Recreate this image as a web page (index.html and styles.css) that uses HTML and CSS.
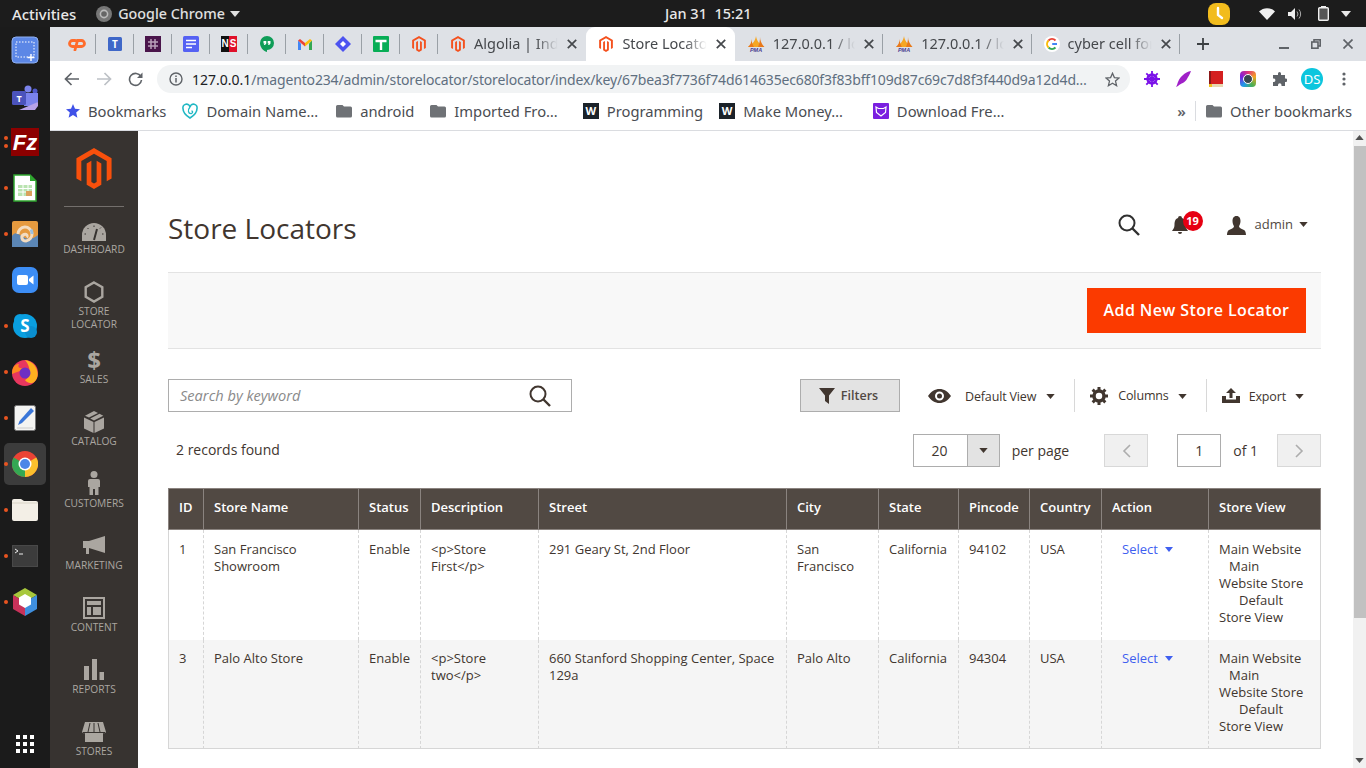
FILE: index.html
```html
<!DOCTYPE html>
<html lang="en">
<head>
<meta charset="utf-8">
<title>Store Locators</title>
<link rel="stylesheet" href="styles.css">
</head>
<body>
<svg class="defs" width="0" height="0" aria-hidden="true">
  <defs>
    <symbol id="mage" viewBox="0 0 36 42">
      <path fill="currentColor" d="M18 0 36 10.4V31.2L31 34V13.3L18 5.8 5 13.3V34L0 31.2V10.4Z"/>
      <path fill="currentColor" d="M18 42 10.5 37.6V15.8L15.3 13V34.8L18 36.4 20.7 34.8V13L25.5 15.8V37.6Z"/>
    </symbol>
    <symbol id="pma" viewBox="0 0 18 16">
      <path fill="#f5a623" d="M9 0C9.500 4 12 8 17 11H1C6 8 8.500 4 9 0Z"/>
      <path fill="#e8791a" d="M13 1C13 4 14.500 8 17.500 11H11C12.500 8 13 4 13 1ZM4.500 3C4.500 6 3.500 9 1 11H7C5.500 9 4.800 6 4.500 3Z"/>
      <text class="pma-text" x="9" y="15.700" text-anchor="middle">PMA</text>
    </symbol>
    <symbol id="folder" viewBox="0 0 16 14">
      <path fill="#6f7276" d="M1.500 1H6.500L8 2.500H14.500A1.500 1.500 0 0 1 16 4V12A1.500 1.500 0 0 1 14.500 13.500H1.500A1.500 1.500 0 0 1 0 12V2.500A1.500 1.500 0 0 1 1.500 1Z"/>
    </symbol>
    <symbol id="caret" viewBox="0 0 10 6">
      <path fill="currentColor" d="M0 0H10L5 6Z"/>
    </symbol>
    <symbol id="tabx" viewBox="0 0 10 10">
      <path d="M0.800 0.800 9.200 9.200M9.200 0.800 0.800 9.200" stroke="#45484c" stroke-width="1.700" fill="none"/>
    </symbol>
  </defs>
</svg>

<header class="sysbar">
  <div class="sys-left">
    <span class="sys-activities">Activities</span>
    <span class="sys-app">
      <svg width="16" height="16" viewBox="0 0 16 16"><circle cx="8" cy="8" r="8" fill="#777"/><circle cx="8" cy="8" r="4.400" fill="#bbb"/><circle cx="8" cy="8" r="2.800" fill="#666"/></svg>
      <span>Google Chrome</span>
      <svg class="sys-caret" width="10" height="6"><use href="#caret"/></svg>
    </span>
  </div>
  <div class="sys-clock">Jan 31&nbsp;&nbsp;15:21</div>
  <div class="sys-right">
    <svg class="sys-lime" width="22" height="22" viewBox="0 0 22 22"><rect width="22" height="22" rx="8" fill="#f2bc1d"/><path d="M10 5V12L14 15" fill="none" stroke="#fff" stroke-width="2.400" stroke-linecap="round"/></svg>
    <svg class="sys-wifi" width="16" height="12" viewBox="0 0 16 12"><path fill="#eee" d="M0 3.500C4.500-1 11.500-1 16 3.500L8 12Z"/></svg>
    <svg class="sys-vol" width="14" height="12" viewBox="0 0 14 12"><path fill="#eee" d="M0 4H3L7 0V12L3 8H0Z"/><path d="M9 3.500A4 4 0 0 1 9 8.500M11 1.500A7 7 0 0 1 11 10.500" fill="none" stroke="#aaa" stroke-width="1"/></svg>
    <svg class="sys-bat" width="11" height="15" viewBox="0 0 11 15"><rect x="3" width="5" height="2" fill="#eee"/><rect x=".7" y="1.700" width="9.600" height="12.600" rx="1" fill="#555" stroke="#eee" stroke-width="1.400"/></svg>
    <svg class="sys-caret2" width="10" height="6"><use href="#caret"/></svg>
  </div>
</header>

<div class="desk">
  <nav class="dock">
    <div class="dock-item">
      <svg width="28" height="28" viewBox="0 0 28 28"><rect x="1" y="1" width="26" height="26" rx="4" fill="#5c87e6" stroke="#8fb0f2"/><rect x="5" y="6" width="18" height="15" fill="none" stroke="#fff" stroke-dasharray="1.500 1.500"/><path d="M20 18V25M16.500 21.500H23.500" stroke="#fff" stroke-width="1.400"/></svg>
    </div>
    <div class="dock-item">
      <svg class="dock-low" width="28" height="26" viewBox="0 0 28 26"><circle cx="17" cy="4" r="3.500" fill="#7b83eb"/><circle cx="24" cy="6" r="2.500" fill="#5059c9"/><path d="M13 8H27V17L24 21H13Z" fill="#7b83eb"/><rect x="1" y="6" width="14" height="14" rx="1.500" fill="#4b53bc"/><path d="M8 25 27 17V21L24 25Z" fill="#b7a2e8"/><text class="dock-t" x="8" y="17" text-anchor="middle">T</text></svg>
    </div>
    <div class="dock-item">
      <span class="dot dot-up"></span><span class="dot dot-down"></span>
      <svg width="28" height="28" viewBox="0 0 28 28"><rect width="28" height="28" fill="#8c0000"/><text class="dock-fz" x="14" y="22" text-anchor="middle">Fz</text></svg>
    </div>
    <div class="dock-item">
      <span class="dot"></span>
      <svg width="24" height="28" viewBox="0 0 24 28"><path d="M1 1H17L23 7V27H1Z" fill="#fff" stroke="#2fa52f" stroke-width="1.500"/><path d="M17 1 23 7H17Z" fill="#2fa52f"/><path d="M5 11H19V22H5Z" fill="#b9e3b0"/><path d="M5 14.500H19M5 18H19M10 11V22M15 11V22" stroke="#fff"/><rect x="13" y="17" width="6" height="5" fill="#d9a15c"/></svg>
    </div>
    <div class="dock-item">
      <span class="dot"></span>
      <svg width="26" height="26" viewBox="0 0 26 26"><rect width="26" height="26" rx="2" fill="#e59a3f"/><path d="M0 15C6 5 12 26 26 14V26H0Z" fill="#5b86b5"/><path d="M6 13A7 7 0 1 1 14 20C9.500 20 8.500 15 12 13.500 14.500 12.500 16 15 14.500 16" fill="none" stroke="#f2dcc0" stroke-width="3"/><path d="M19 8.500A7 7 0 0 1 20 13" fill="none" stroke="#9cc0e0" stroke-width="3"/></svg>
    </div>
    <div class="dock-item">
      <svg width="26" height="26" viewBox="0 0 26 26"><rect width="26" height="26" rx="7" fill="#3c8df5"/><rect x="5" y="8" width="11" height="10" rx="2" fill="#fff"/><path d="M17 12 21.500 8.500V17.500L17 14Z" fill="#fff"/></svg>
    </div>
    <div class="dock-item">
      <span class="dot"></span>
      <svg width="26" height="26" viewBox="0 0 26 26"><circle cx="13" cy="13" r="12" fill="#0a9fe0"/><circle cx="8" cy="7" r="6" fill="#0a9fe0"/><circle cx="19" cy="19" r="6" fill="#0a8fd0"/><text class="dock-s" x="13" y="19" text-anchor="middle">S</text></svg>
    </div>
    <div class="dock-item">
      <span class="dot"></span>
      <svg width="26" height="28" viewBox="0 0 26 28"><circle cx="13" cy="15" r="13" fill="#e8375f"/><path d="M13 2C25 4 28 16 24 22 20 28 14 24 13 22 18 20 20 10 13 2Z" fill="#ffb01f"/><path d="M0 16C0 8 4 6 7 6 5 10 8 10 13 11 10 12 5 14 0 16Z" fill="#ff8a1e"/><circle cx="13" cy="15" r="5.500" fill="#6e2fc4"/></svg>
    </div>
    <div class="dock-item">
      <span class="dot"></span>
      <svg width="22" height="26" viewBox="0 0 22 26"><rect x=".5" y=".5" width="21" height="25" rx="2" fill="#f4f4f2" stroke="#777"/><path d="M17 3 20 6 8 18 4 20 5.500 16Z" fill="#3a76d8"/><path d="M3 23H19" stroke="#ccc"/></svg>
    </div>
    <div class="dock-item dock-active">
      <span class="dot"></span>
      <svg width="26" height="26" viewBox="0 0 26 26"><circle cx="13" cy="13" r="13" fill="#ea4335"/><path d="M13 13 1.700 6.500A13 13 0 0 0 13 26Z" fill="#34a853"/><path d="M13 13 13 26A13 13 0 0 0 24.300 6.500Z" fill="#fbc02d"/><circle cx="13" cy="13" r="6.500" fill="#fff"/><circle cx="13" cy="13" r="5" fill="#4a86e8"/></svg>
    </div>
    <div class="dock-item">
      <span class="dot"></span>
      <svg width="28" height="24" viewBox="0 0 28 24"><path d="M1 3Q1 1 3 1H10L13 3H25Q27 3 27 5V21Q27 23 25 23H3Q1 23 1 21Z" fill="#f3efe6"/><path d="M1 5H27" stroke="#d9d4c6"/></svg>
    </div>
    <div class="dock-item">
      <span class="dot"></span>
      <svg width="26" height="22" viewBox="0 0 26 22"><rect width="26" height="22" rx="2" fill="#3c3c3c" stroke="#555"/><path d="M3 4 6 6 3 8M7 9H11" fill="none" stroke="#eee"/></svg>
    </div>
    <div class="dock-item">
      <span class="dot"></span>
      <svg width="24" height="28" viewBox="0 0 24 28"><path d="M12 0 24 7 12 14 0 7Z" fill="#a8c83c"/><path d="M0 7 12 14V28L0 21Z" fill="#c8325a"/><path d="M24 7 12 14V28L24 21Z" fill="#3f8fde"/><path d="M12 6 18 9.500V16.500L12 20 6 16.500V9.500Z" fill="#fff"/></svg>
    </div>
    <div class="dock-item dock-apps">
      <svg width="18" height="18" viewBox="0 0 18 18"><g fill="#fff"><rect width="4" height="4"/><rect x="7" width="4" height="4"/><rect x="14" width="4" height="4"/><rect y="7" width="4" height="4"/><rect x="7" y="7" width="4" height="4"/><rect x="14" y="7" width="4" height="4"/><rect y="14" width="4" height="4"/><rect x="7" y="14" width="4" height="4"/><rect x="14" y="14" width="4" height="4"/></g></svg>
    </div>
  </nav>

  <div class="browser">
    <div class="tabstrip">
      <div class="pin"><svg width="18" height="14" viewBox="0 0 18 14"><path d="M7 3.500H4.500A3 3 0 0 0 4.500 9.500H6M7 13 9.500 3.500H13.500A3 3 0 0 1 13.500 9.500H10" fill="none" stroke="#ff6c2c" stroke-width="2.800" stroke-linecap="round"/></svg></div>
      <div class="pin"><svg width="14" height="14" viewBox="0 0 14 14"><rect width="14" height="14" rx="1.500" fill="#3f67c8"/><text class="fav-t" x="7" y="11" text-anchor="middle">T</text></svg></div>
      <div class="pin"><svg width="16" height="16" viewBox="0 0 16 16"><rect width="16" height="16" fill="#4a154b"/><path d="M3 6H13M3 10H13M6 3V13M10 3V13" stroke="#b9a0ba" stroke-width="1.500"/></svg></div>
      <div class="pin"><svg width="16" height="16" viewBox="0 0 16 16"><rect width="16" height="16" rx="1.500" fill="#5561f3"/><path d="M3 4.500H13M3 8H13M3 11.500H9" stroke="#fff" stroke-width="1.500"/></svg></div>
      <div class="pin"><span class="fav-ns"><span class="fav-n">N</span><span class="fav-s">S</span></span></div>
      <div class="pin"><svg width="14" height="16" viewBox="0 0 14 16"><path d="M7 0A7 7 0 0 1 7 14V16C3 15 0 11 0 7A7 7 0 0 1 7 0Z" fill="#0f9d58"/><path d="M3.500 5H6.300V7.500L5 9H3.800L4.600 7.500H3.500ZM7.700 5H10.500V7.500L9.200 9H8L8.800 7.500H7.700Z" fill="#fff"/></svg></div>
      <div class="pin"><svg width="14" height="11" viewBox="0 0 14 11"><path d="M0 1.500V11H3V4.500Z" fill="#4285f4"/><path d="M14 1.500V11H11V4.500Z" fill="#34a853"/><path d="M0 1.500 2 0 7 4 7 7.500Z" fill="#ea4335"/><path d="M14 1.500 12 0 7 4V7.500Z" fill="#fbbc05"/></svg></div>
      <div class="pin"><svg width="16" height="16" viewBox="0 0 16 16"><path d="M8 0 16 8 8 16 0 8Z" fill="#4c53f0"/><path d="M8 5 11 8 8 11 5 8Z" fill="#fff"/></svg></div>
      <div class="pin"><svg width="16" height="16" viewBox="0 0 16 16"><rect width="16" height="16" rx="1" fill="#08ad56"/><path d="M2.500 5H13.500M8 5V14" stroke="#fff" stroke-width="2.400"/></svg></div>
      <div class="pin"><svg class="mage" width="14" height="16"><use href="#mage"/></svg></div>
      <div class="tab">
        <svg class="mage tab-mage" width="14" height="16"><use href="#mage"/></svg>
        <span class="tab-title">Algolia | Index</span>
        <svg class="tab-x" width="10" height="10"><use href="#tabx"/></svg>
      </div>
      <div class="tab tab-on">
        <svg class="mage tab-mage" width="14" height="16"><use href="#mage"/></svg>
        <span class="tab-title">Store Locators</span>
        <svg class="tab-x" width="10" height="10"><use href="#tabx"/></svg>
      </div>
      <div class="tab">
        <svg width="18" height="16"><use href="#pma"/></svg>
        <span class="tab-title">127.0.0.1 / localhost</span>
        <svg class="tab-x" width="10" height="10"><use href="#tabx"/></svg>
      </div>
      <div class="tab">
        <svg width="18" height="16"><use href="#pma"/></svg>
        <span class="tab-title">127.0.0.1 / localhost</span>
        <svg class="tab-x" width="10" height="10"><use href="#tabx"/></svg>
      </div>
      <div class="tab">
        <svg class="tab-g" width="16" height="16" viewBox="0 0 16 16"><circle cx="8" cy="8" r="8" fill="#fff"/><path d="M13 8H8.200" stroke="#4285f4" stroke-width="2"/><path d="M11.500 11.500A5 5 0 0 1 4.500 11.500" fill="none" stroke="#34a853" stroke-width="2"/><path d="M4.500 11.500A5 5 0 0 1 4.500 4.500" fill="none" stroke="#fbbc05" stroke-width="2"/><path d="M4.500 4.500A5 5 0 0 1 11.500 4.500" fill="none" stroke="#ea4335" stroke-width="2"/></svg>
        <span class="tab-title">cyber cell for india</span>
        <svg class="tab-x" width="10" height="10"><use href="#tabx"/></svg>
      </div>
      <svg class="newtab" width="12" height="12" viewBox="0 0 12 12"><path d="M6 0V12M0 6H12" stroke="#3c4043" stroke-width="1.800"/></svg>
      <div class="winctl">
        <svg width="10" height="10" viewBox="0 0 10 10"><path d="M0 9H10" stroke="#5f6368" stroke-width="2"/></svg>
        <svg width="10" height="10" viewBox="0 0 10 10"><rect x="3" y="0.800" width="6.200" height="6.200" fill="none" stroke="#5f6368" stroke-width="1.600"/><rect x="0.800" y="3" width="6.200" height="6.200" fill="#dee1e6" stroke="#5f6368" stroke-width="1.600"/></svg>
        <svg width="10" height="10" viewBox="0 0 10 10"><path d="M0.500 0.500 9.500 9.500M9.500 0.500 0.500 9.500" stroke="#5f6368" stroke-width="1.700"/></svg>
      </div>
    </div>

    <div class="toolbar">
      <svg class="tb-back" width="16" height="14" viewBox="0 0 16 14"><path d="M15 7H2M7.500 1 1.500 7 7.500 13" fill="none" stroke="#5f6368" stroke-width="1.700"/></svg>
      <svg class="tb-fwd" width="16" height="14" viewBox="0 0 16 14"><path d="M1 7H14M8.500 1 14.500 7 8.500 13" fill="none" stroke="#bdc1c6" stroke-width="1.700"/></svg>
      <svg class="tb-reload" width="15" height="15" viewBox="0 0 15 15"><path d="M12.800 4.500A6 6 0 1 0 13.500 8" fill="none" stroke="#5f6368" stroke-width="1.600"/><path d="M14.500 0.500V6H9Z" fill="#5f6368"/></svg>
      <div class="omni">
        <svg width="14" height="14" viewBox="0 0 14 14"><circle cx="7" cy="7" r="6" fill="none" stroke="#5f6368" stroke-width="1.400"/><path d="M7 6V10.500M7 3.500V5" stroke="#5f6368" stroke-width="1.500"/></svg>
        <span class="url"><span class="url-host">127.0.0.1</span>/magento234/admin/storelocator/storelocator/index/key/67bea3f7736f74d614635ec680f3f83bff109d87c69c7d8f3f440d9a12d4d…</span>
        <svg class="omni-star" width="15" height="15" viewBox="0 0 15 15"><path d="M7.500 1.300 9.400 5.600 14 6 10.500 9.100 11.600 13.700 7.500 11.300 3.400 13.700 4.500 9.100 1 6 5.600 5.600Z" fill="none" stroke="#5f6368" stroke-width="1.300"/></svg>
      </div>
      <div class="exts">
        <svg width="16" height="16" viewBox="0 0 16 16"><circle cx="8" cy="8" r="4.500" fill="none" stroke="#7a11e8" stroke-width="2.400"/><path d="M8 0V16M0 8H16M2.300 2.300 13.700 13.700M13.700 2.300 2.300 13.700" stroke="#7a11e8" stroke-width="1.800"/></svg>
        <svg width="16" height="16" viewBox="0 0 16 16"><path d="M15 0C9 1 3 6 1 14L0 16 2 15C5 12 9 12 11 8 12 6 14 3 15 0Z" fill="#a020c8"/></svg>
        <svg width="16" height="16" viewBox="0 0 16 16"><rect x="1" width="14" height="13" fill="#d42020"/><rect x="1" y="13" width="14" height="3" fill="#e8d8b0"/><rect x="1" width="2" height="16" fill="#8c1818"/><rect x="1" y="13" width="3" height="3" fill="#f0c020"/></svg>
        <span class="ext-cam"><span class="ext-cam-in"></span></span>
        <svg width="14" height="14" viewBox="0 0 14 14"><path fill="#5f6368" d="M5 1.500A1.500 1.500 0 0 1 8 1.500V3H12V6.500H13A1.800 1.800 0 0 1 13 10H12V14H8.500V13A1.700 1.700 0 0 0 5 13V14H0V10H1A1.800 1.800 0 0 0 1 6.500H0V3H5Z"/></svg>
        <span class="avatar">DS</span>
        <svg width="4" height="14" viewBox="0 0 4 14"><g fill="#5f6368"><circle cx="2" cy="2" r="1.600"/><circle cx="2" cy="7" r="1.600"/><circle cx="2" cy="12" r="1.600"/></g></svg>
      </div>
    </div>

    <div class="bookmarks">
      <div class="bm"><svg width="14" height="14" viewBox="0 0 14 14"><path fill="#3f51e8" d="M7 0 9 4.800 14 5.300 10.200 8.600 11.400 13.700 7 11 2.600 13.700 3.800 8.600 0 5.300 5 4.800Z"/></svg><span>Bookmarks</span></div>
      <div class="bm"><svg width="16" height="16" viewBox="0 0 16 16"><path d="M8 15C3 12 1 9 1 5.500A3.500 3.500 0 0 1 8 4 3.500 3.500 0 0 1 15 5.500C15 9 13 12 8 15Z" fill="none" stroke="#22b8c4" stroke-width="1.600"/><path d="M8 4C5.500 7 6 11 9.500 10.500 11 10 11 8 9.500 8" fill="none" stroke="#22b8c4" stroke-width="1.300"/></svg><span>Domain Name…</span></div>
      <div class="bm bm-a"><svg width="16" height="14"><use href="#folder"/></svg><span>android</span></div>
      <div class="bm"><svg width="16" height="14"><use href="#folder"/></svg><span>Imported Fro…</span></div>
      <div class="bm bm-w"><span class="w-ico">W</span><span>Programming</span></div>
      <div class="bm"><span class="w-ico">W</span><span>Make Money…</span></div>
      <div class="bm bm-d"><svg width="16" height="16" viewBox="0 0 16 16"><rect width="16" height="16" rx="1" fill="#7a1fe0"/><path d="M3 4 5.500 5.500H10.500L13 4 12.500 9.500 8 13 3.500 9.500Z" fill="none" stroke="#fff" stroke-width="1.200"/></svg><span>Download Fre…</span></div>
      <div class="bm-right">
        <span class="bm-more">»</span>
        <span class="bm-sep"></span>
        <div class="bm"><svg width="16" height="14"><use href="#folder"/></svg><span>Other bookmarks</span></div>
      </div>
    </div>

    <div class="page">
      <aside class="side">
        <div class="side-logo"><svg class="logo" width="36" height="41"><use href="#mage"/></svg></div>
        <ul class="side-nav">
          <li class="nav">
            <span class="nav-ico"><svg class="ico-dash" width="24" height="18" viewBox="0 0 24 18"><path fill="#aaa6a0" d="M0 18V12A12 12 0 0 1 24 12V18Z"/><path d="M12 17 15 6" stroke="#373330" stroke-width="2"/><path d="M4 11H2.500M6.500 6 5.500 5M12 4V2.500M21.500 11H20M18 5.500 19 4.500" stroke="#373330"/></svg></span>
            <span class="nav-label">Dashboard</span>
          </li>
          <li class="nav nav-tall">
            <span class="nav-ico"><svg width="20" height="22" viewBox="0 0 20 22"><path d="M10 1.500 18.300 6.200V15.800L10 20.500 1.700 15.800V6.200Z" fill="none" stroke="#aaa6a0" stroke-width="2.400"/></svg></span>
            <span class="nav-label">Store<br>Locator</span>
          </li>
          <li class="nav">
            <span class="nav-ico nav-dollar">$</span>
            <span class="nav-label">Sales</span>
          </li>
          <li class="nav">
            <span class="nav-ico"><svg width="20" height="22" viewBox="0 0 20 22"><path fill="#aaa6a0" d="M0 6.500 9.500 11V22L0 17.500ZM20 6.500 10.500 11V22L20 17.500ZM10 0 14 2 5 6.500 1 4.700ZM15.500 2.800 19.300 4.700 10 9.500 6.200 7.500Z"/></svg></span>
            <span class="nav-label">Catalog</span>
          </li>
          <li class="nav">
            <span class="nav-ico"><svg class="ico-cust" width="12" height="24" viewBox="0 0 12 24"><circle cx="6" cy="3.500" r="3.500" fill="#aaa6a0"/><path fill="#aaa6a0" d="M2 8H10Q12 8 12 10V16H10.500V24H7V18H5V24H1.500V16H0V10Q0 8 2 8Z"/></svg></span>
            <span class="nav-label">Customers</span>
          </li>
          <li class="nav">
            <span class="nav-ico"><svg width="22" height="20" viewBox="0 0 22 20"><path fill="#aaa6a0" d="M0 5H6L22 0V17L6 12V18H3V12H0Z"/></svg></span>
            <span class="nav-label">Marketing</span>
          </li>
          <li class="nav">
            <span class="nav-ico"><svg width="22" height="22" viewBox="0 0 22 22"><rect x="1" y="1" width="20" height="20" fill="none" stroke="#aaa6a0" stroke-width="2"/><path fill="#aaa6a0" d="M4 4H18V8H4ZM4 10H8V18H4ZM10 10H18V18H10Z"/></svg></span>
            <span class="nav-label">Content</span>
          </li>
          <li class="nav">
            <span class="nav-ico"><svg width="20" height="21" viewBox="0 0 20 21"><path fill="#aaa6a0" d="M0 7H5V21H0ZM8 0H13V21H8ZM15.500 13H20V21H15.500Z"/></svg></span>
            <span class="nav-label">Reports</span>
          </li>
          <li class="nav">
            <span class="nav-ico"><svg width="24" height="20" viewBox="0 0 24 20"><path fill="#aaa6a0" d="M3 0H21L24 10A2.500 2.500 0 0 1 21 11V20H3V11A2.500 2.500 0 0 1 0 10Z"/><path d="M8 1 6 10M12 1V10M16 1 18 10M1 10.500H23" stroke="#373330" stroke-width="1"/></svg></span>
            <span class="nav-label">Stores</span>
          </li>
        </ul>
      </aside>

      <main class="content">
        <div class="title-row">
          <h1 class="title">Store Locators</h1>
          <div class="admin-tools">
            <svg class="tool-search" width="22" height="22" viewBox="0 0 22 22"><circle cx="9" cy="9" r="7.500" fill="none" stroke="#303030" stroke-width="2"/><path d="M14.500 14.500 21 21" stroke="#303030" stroke-width="2.400"/></svg>
            <span class="bell">
              <svg width="16" height="19" viewBox="0 0 16 19"><path fill="#41362f" d="M8 0A2 2 0 0 1 10 2C13 3 13.500 6 13.500 9 13.500 12 15 13.500 16 15H0C1 13.500 2.500 12 2.500 9 2.500 6 3 3 6 2A2 2 0 0 1 8 0ZM6 16H10A2 2 0 0 1 6 16Z"/></svg>
              <span class="badge">19</span>
            </span>
            <svg class="tool-user" width="19" height="19" viewBox="0 0 19 19"><path fill="#41362f" d="M9.500 0C12.500 0 13.500 2.500 13.500 5 13.500 7.500 12.500 9 12 10.500 12 12 15 13 17 14 19 15 19 19 19 19H0S0 15 2 14C4 13 7 12 7 10.500 6.500 9 5.500 7.500 5.500 5 5.500 2.500 6.500 0 9.500 0Z"/></svg>
            <span class="admin-name">admin</span>
            <svg class="tool-caret" width="9" height="5"><use href="#caret"/></svg>
          </div>
        </div>

        <div class="actions">
          <button class="add-btn" type="button">Add New Store Locator</button>
        </div>

        <div class="filters">
          <div class="search">
            <span class="search-ph">Search by keyword</span>
            <svg width="22" height="22" viewBox="0 0 22 22"><circle cx="9" cy="9" r="7.500" fill="none" stroke="#41362f" stroke-width="2"/><path d="M14.500 14.500 21 21" stroke="#41362f" stroke-width="2.400"/></svg>
          </div>
          <button class="filter-btn" type="button">
            <svg width="16" height="16" viewBox="0 0 16 16"><path fill="#41362f" d="M0 0H16L10 7.500V16L6 13V7.500Z"/></svg>
            <span>Filters</span>
          </button>
          <div class="drop drop-view">
            <svg width="23" height="14" viewBox="0 0 23 14"><path fill="#41362f" fill-rule="evenodd" d="M0 7C3 2.500 7 0 11.500 0S20 2.500 23 7C20 11.500 16 14 11.500 14S3 11.500 0 7ZM11.500 2.500A4.500 4.500 0 1 0 11.500 11.500 4.500 4.500 0 0 0 11.500 2.500Z"/><circle cx="11.500" cy="7" r="2.500" fill="#41362f"/></svg>
            <span class="drop-text">Default View</span>
            <svg class="drop-caret" width="9" height="5"><use href="#caret"/></svg>
          </div>
          <span class="vsep"></span>
          <div class="drop drop-cols">
            <svg width="18" height="18" viewBox="0 0 18 18"><circle cx="9" cy="9" r="5" fill="none" stroke="#41362f" stroke-width="3.500"/><path d="M9 0V18M0 9H18M2.600 2.600 15.400 15.400M15.400 2.600 2.600 15.400" stroke="#41362f" stroke-width="3" stroke-dasharray="3 12 3"/></svg>
            <span class="drop-text">Columns</span>
            <svg class="drop-caret" width="9" height="5"><use href="#caret"/></svg>
          </div>
          <span class="vsep"></span>
          <div class="drop drop-exp">
            <svg width="18" height="15" viewBox="0 0 18 15"><path fill="#41362f" d="M9 0 14 5H10.500V10H7.500V5H4ZM0 8H4V11.500H14V8H18V15H0Z"/></svg>
            <span class="drop-text">Export</span>
            <svg class="drop-caret" width="9" height="5"><use href="#caret"/></svg>
          </div>
        </div>

        <div class="pager">
          <span class="records">2 records found</span>
          <div class="per">
            <span class="per-val">20</span>
            <span class="per-arrow"><svg width="9" height="5"><use href="#caret"/></svg></span>
          </div>
          <span class="per-text">per page</span>
          <span class="pg-btn pg-prev"><svg width="9" height="14" viewBox="0 0 9 14"><path d="M8 1 2 7 8 13" fill="none" stroke="#adadad" stroke-width="1.600"/></svg></span>
          <span class="pg-input">1</span>
          <span class="pg-of">of 1</span>
          <span class="pg-btn pg-next"><svg width="9" height="14" viewBox="0 0 9 14"><path d="M1 1 7 7 1 13" fill="none" stroke="#adadad" stroke-width="1.600"/></svg></span>
        </div>

        <table class="grid">
          <colgroup>
            <col class="c-id"><col class="c-name"><col class="c-status"><col class="c-desc"><col class="c-street"><col class="c-city"><col class="c-state"><col class="c-pin"><col class="c-country"><col class="c-action"><col class="c-view">
          </colgroup>
          <thead>
            <tr><th>ID</th><th>Store Name</th><th>Status</th><th>Description</th><th>Street</th><th>City</th><th>State</th><th>Pincode</th><th>Country</th><th>Action</th><th>Store View</th></tr>
          </thead>
          <tbody>
            <tr class="r1">
              <td>1</td><td>San Francisco Showroom</td><td>Enable</td><td>&lt;p&gt;Store First&lt;/p&gt;</td><td>291 Geary St, 2nd Floor</td><td>San Francisco</td><td>California</td><td>94102</td><td>USA</td>
              <td class="act"><span class="sel">Select<svg width="8" height="5"><use href="#caret"/></svg></span></td>
              <td><div>Main Website</div><div class="in1">Main Website Store</div><div class="in2">Default Store View</div></td>
            </tr>
            <tr class="r2">
              <td>3</td><td>Palo Alto Store</td><td>Enable</td><td>&lt;p&gt;Store two&lt;/p&gt;</td><td>660 Stanford Shopping Center, Space 129a</td><td>Palo Alto</td><td>California</td><td>94304</td><td>USA</td>
              <td class="act"><span class="sel">Select<svg width="8" height="5"><use href="#caret"/></svg></span></td>
              <td><div>Main Website</div><div class="in1">Main Website Store</div><div class="in2">Default Store View</div></td>
            </tr>
          </tbody>
        </table>
      </main>

      <div class="scrollbar">
        <svg width="9" height="5" class="sb-up"><use href="#caret"/></svg>
        <span class="sb-thumb"></span>
        <svg width="9" height="5" class="sb-down"><use href="#caret"/></svg>
      </div>
    </div>
  </div>
</div>
</body>
</html>
```

FILE: styles.css
```css
* { box-sizing: border-box; }
html, body { margin: 0; padding: 0; width: 1366px; height: 768px; overflow: hidden; }
body { font-family: "Open Sans", sans-serif; color: #41362f; background: #fff; }
.defs { position: absolute; }
svg { display: block; flex: none; }
.pma-text { font: italic 700 5.500px "Liberation Sans", sans-serif; fill: #4b3d8f; }

/* system bar */
.sysbar { height: 27px; background: #1c1c1c; color: #e8e8e8; display: flex; align-items: center; position: relative; font-family: "Noto Sans", sans-serif; font-size: 14.300px; font-weight: 500; }
.sys-left { display: flex; align-items: center; padding-left: 12px; }
.sys-activities { font-size: 14.900px; }
.sys-app { display: flex; align-items: center; margin-left: 20px; color: #e0e0e0; }
.sys-app span { margin-left: 6px; }
.sys-caret { margin-left: 5px; color: #e0e0e0; }
.sys-clock { position: absolute; left: 665px; top: 4px; line-height: 18px; font-size: 14.500px; }
.sys-right { margin-left: auto; display: flex; align-items: center; padding-right: 15px; }
.sys-wifi { margin-left: 29px; }
.sys-vol { margin-left: 13px; }
.sys-bat { margin-left: 16px; }
.sys-caret2 { margin-left: 12px; color: #e8e8e8; }

/* layout */
.desk { display: flex; height: 741px; }
.dock { width: 50px; background: #1b1b1b; display: flex; flex-direction: column; padding-bottom: 1px; }
.dock-item { height: 46px; display: flex; align-items: center; justify-content: center; position: relative; flex: none; }
.dock-low { margin-top: 4px; }
.dock-active { background: #3c3c3c; border-radius: 5px; margin: 2px 4px; height: 42px; }
.dock-apps { margin-top: auto; }
.dot { position: absolute; left: 4px; top: 21px; width: 4px; height: 4px; border-radius: 50%; background: #e95420; }
.dot-up { top: 17px; }
.dot-down { top: 25px; }
.dock-active .dot { top: 19px; left: 0; }
.dock-t { font: 700 9px "Open Sans", sans-serif; fill: #fff; }
.dock-fz { font: italic 700 22px "Liberation Sans", sans-serif; fill: #fff; }
.dock-s { font: 700 17px "Open Sans", sans-serif; fill: #fff; }

.browser { flex: 1; min-width: 0; display: flex; flex-direction: column; }

/* tab strip */
.tabstrip { height: 34px; background: #dee1e6; display: flex; align-items: center; padding-left: 8px; position: relative; font-family: "Noto Sans", sans-serif; font-size: 14.500px; color: #45484c; }
.pin { width: 38px; height: 34px; display: flex; align-items: center; justify-content: center; position: relative; flex: none; }
.pin::after, .tab::after { content: ""; position: absolute; right: 0; top: 7px; height: 20px; width: 1px; background: #9aa0a6; }
.mage { color: #f4511e; }
.fav-t { font: 700 10px "Open Sans", sans-serif; fill: #fff; }
.fav-ns { display: flex; width: 16px; height: 16px; font: 700 10px/16px "Liberation Sans", sans-serif; color: #fff; text-align: center; }
.fav-n { width: 8px; background: #111; }
.fav-s { width: 8px; background: #e0102a; }
.tab { width: 148.400px; height: 34px; display: flex; align-items: center; padding: 0 9px 0 12px; position: relative; flex: none; }
.tab-mage { margin: 0 1px; }
.tab-title { margin: 0 2px 2px 8px; flex: 1; min-width: 0; white-space: nowrap; overflow: hidden; -webkit-mask-image: linear-gradient(90deg, #000 68%, transparent 92%); mask-image: linear-gradient(90deg, #000 68%, transparent 92%); }
.tab-on { background: #fff; border-radius: 9px 9px 0 0; }
.tab-on::after { display: none; }
.tab:nth-child(11)::after { display: none; }
.newtab { margin-left: 17px; }
.winctl { margin-left: auto; display: flex; gap: 22px; padding-right: 13px; }

/* toolbar */
.toolbar { height: 33px; background: #fff; display: flex; align-items: center; padding: 3px 0 0 14px; font-family: "Noto Sans", sans-serif; }
.tb-fwd { margin-left: 16px; }
.tb-reload { margin-left: 16px; }
.omni { margin-left: 14px; width: 973px; height: 28px; border-radius: 14px; background: #f1f3f4; display: flex; align-items: center; padding: 0 10px 0 12px; }
.url { margin-left: 9px; font-size: 14px; letter-spacing: -0.157px; color: #5f6f80; white-space: nowrap; overflow: hidden; flex: 1; min-width: 0; }
.url-host { color: #202124; letter-spacing: 0; }
.omni-star { flex: none; }
.exts { display: grid; grid-template-columns: repeat(7, 32px); justify-items: center; align-items: center; margin-left: 6px; }
.ext-cam { width: 16px; height: 16px; border-radius: 4px; background: conic-gradient(#e0307a, #f5a623, #4caf50, #1e9be8, #7a1fe0, #e0307a); display: flex; align-items: center; justify-content: center; }
.ext-cam-in { width: 10px; height: 10px; border-radius: 50%; background: #37474f; border: 1.500px solid #fff; }
.avatar { width: 22px; height: 22px; border-radius: 50%; background: #0cc6de; color: #fff; font-size: 13px; line-height: 22px; text-align: center; }

/* bookmarks */
.bookmarks { height: 37px; background: #fff; border-bottom: 1px solid #dadce0; display: flex; align-items: center; padding: 0 14px 2px 16px; gap: 16px; font-family: "Noto Sans", sans-serif; font-size: 14.750px; color: #4a4d52; }
.bm { display: flex; align-items: center; gap: 8px; white-space: nowrap; }
.w-ico { width: 16px; height: 16px; background: #1b2229; color: #fff; font: 700 11px/16px "Open Sans", sans-serif; text-align: center; }
.bm-a { margin-left: 2px; }
.bm-w { margin-left: 9px; }
.bm-d { margin-left: 14px; }
.bm-right { margin-left: auto; display: flex; align-items: center; }
.bm-more { color: #5f6368; font-size: 15px; font-weight: 600; }
.bm-sep { width: 1px; height: 20px; background: #dadce0; margin: 0 10px 0 9px; }

/* page */
.page { flex: 1; min-height: 0; display: flex; background: #fff; }
.side { width: 88px; background: #373330; flex: none; }
.side-logo { height: 76px; margin: 0 14px; padding-top: 17px; border-bottom: 1px solid #736f6c; display: flex; justify-content: center; }
.logo { color: #f8500c; }
.side-nav { list-style: none; margin: 9px 0 0; padding: 0; }
.nav { height: 62px; display: flex; flex-direction: column; align-items: center; }
.nav-tall { height: 68px; }
.nav-ico { height: 27px; display: flex; align-items: center; justify-content: center; }
.ico-dash { margin-top: 4px; }
.ico-cust { margin-top: -1px; }
.nav-dollar { font-size: 24px; font-weight: 700; color: #aaa6a0; line-height: 27px; }
.nav-label { font-size: 10.200px; line-height: 13px; color: #aaa6a0; text-transform: uppercase; text-align: center; }

.content { flex: 1; min-width: 0; padding: 0 32px 0 30px; }
.title-row { display: flex; justify-content: space-between; align-items: flex-start; padding-top: 79px; height: 141px; }
.title { margin: 0; font-size: 28px; font-weight: 400; line-height: 36px; color: #41362f; }
.admin-tools { display: flex; align-items: center; height: 26px; padding-right: 13px; margin-top: 2px; }
.bell { position: relative; margin-left: 32px; margin-right: 39px; }
.badge { position: absolute; left: 11px; top: -5px; width: 20px; height: 20px; border-radius: 50%; background: #e60012; color: #fff; font-size: 11px; font-weight: 700; line-height: 20px; text-align: center; }
.admin-name { margin: -3px 0 0 9px; font-size: 13px; color: #514943; }
.tool-caret { margin: -1px 0 0 6px; color: #41362f; }

.actions { height: 77px; background: #f8f8f8; border-top: 1px solid #e3e3e3; border-bottom: 1px solid #e3e3e3; display: flex; justify-content: flex-end; align-items: center; padding-right: 15px; }
.add-btn { width: 219px; height: 45px; border: 0; background: #fb3a00; color: #fff; font: 600 16px "Open Sans", sans-serif; letter-spacing: 0.400px; padding: 0 0 2px; }

.filters { display: flex; align-items: center; height: 33px; margin-top: 30px; }
.search { width: 404px; height: 33px; border: 1px solid #adadad; display: flex; align-items: center; justify-content: space-between; padding: 0 20px 0 11px; }
.search-ph { font-size: 14.600px; font-style: italic; color: #8a8a8a; padding-bottom: 2px; }
.filter-btn { margin-left: 228px; width: 100px; height: 33px; background: #e3e3e3; border: 1px solid #adadad; display: flex; align-items: center; justify-content: center; gap: 6px; font: 600 12.500px "Open Sans", sans-serif; color: #514943; padding: 0 3px 0 0; }
.drop { display: flex; align-items: center; color: #41362f; font-size: 12.500px; }
.drop-view { margin-left: 28px; }
.drop-text { margin-top: 2px; letter-spacing: -0.150px; }
.drop-view .drop-text { margin-left: 14px; }
.drop-cols .drop-text { margin-left: 10px; margin-top: 0; }
.drop-exp .drop-text { margin-left: 9px; }
.drop-caret { margin: 2px 0 0 9px; }
.drop-view .drop-caret { margin-left: 10px; }
.vsep { width: 1px; height: 33px; background: #d8d8d8; margin: 0 15px 0 19px; }

.pager { display: flex; align-items: center; height: 33px; margin-top: 22px; font-size: 14px; }
.records { margin: -2px auto 0 8px; }
.per { width: 87px; height: 33px; border: 1px solid #adadad; display: flex; align-items: stretch; }
.per-val { flex: 1; text-align: center; line-height: 31px; padding-right: 1px; }
.per-arrow { width: 32px; background: #e3e3e3; border-left: 1px solid #adadad; display: flex; align-items: center; justify-content: center; }
.per-text { margin-left: 12px; }
.pg-btn { width: 44px; height: 33px; background: #f0f0f0; border: 1px solid #d8d8d8; display: flex; align-items: center; justify-content: center; }
.pg-prev { margin-left: 35px; }
.pg-input { margin-left: 29px; width: 44px; height: 33px; border: 1px solid #adadad; text-align: center; line-height: 31px; }
.pg-of { margin-left: 12px; }
.pg-next { margin-left: 19px; }

.grid { margin-top: 21px; width: 1153px; table-layout: fixed; border-collapse: separate; border-spacing: 0; font-size: 13px; line-height: 17px; }
.c-id { width: 36px; } .c-name { width: 155px; } .c-status { width: 62px; } .c-desc { width: 118px; } .c-street { width: 248px; } .c-city { width: 92px; } .c-state { width: 80px; } .c-pin { width: 71px; } .c-country { width: 72px; } .c-action { width: 107px; } .c-view { width: 112px; }
.grid th { height: 42px; background: #514943; color: #fff; font-weight: 600; text-align: left; padding: 0 0 3px 10px; border-top: 1px solid #8a837f; border-right: 1px solid #8a837f; border-bottom: 1px solid #8a837f; white-space: nowrap; }
.grid th:first-child { border-left: 1px solid #8a837f; }
.grid td { vertical-align: top; padding: 10px 9px 0 10px; border-right: 1px dashed #d6d6d6; color: #41362f; }
.grid td:first-child { border-left: 1px solid #d6d6d6; }
.grid td:last-child { border-right: 1px solid #d6d6d6; padding-right: 0; }
.r1 td { height: 110px; padding-top: 11px; }
.r2 td { height: 109px; background: #f5f5f5; padding-top: 10px; border-bottom: 1px solid #d6d6d6; }
.act { padding-left: 20px !important; }
.sel { color: #3f5ff0; display: flex; align-items: center; gap: 7px; }
.in1 { text-indent: 10px; width: 88px; }
.in2 { text-indent: 20px; width: 88px; }

.scrollbar { width: 13px; background: #f1f1f1; flex: none; display: flex; flex-direction: column; align-items: center; color: #505050; padding-top: 4px; }
.sb-up { transform: rotate(180deg); }
.sb-thumb { width: 12px; height: 472px; background: #c1c1c1; margin-top: 6px; }
.sb-down { margin-top: auto; margin-bottom: 5px; }
```
